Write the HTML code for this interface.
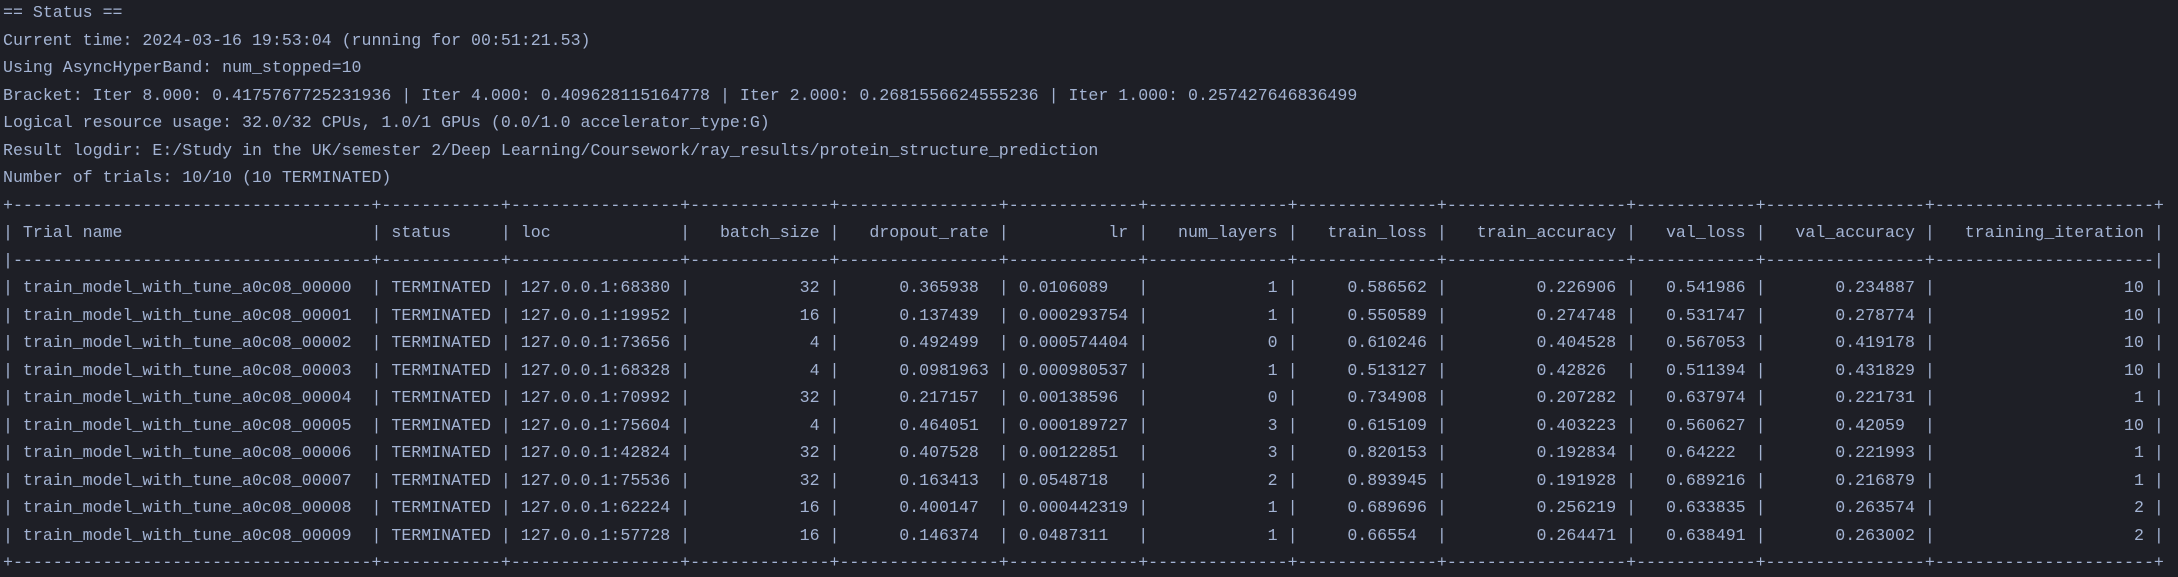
<!DOCTYPE html>
<html><head><meta charset="utf-8">
<style>
html,body{margin:0;padding:0;background:#1e1f26;width:2178px;height:577px;overflow:hidden}
pre{margin:0;position:absolute;left:3px;top:-1px;font-family:"Liberation Mono",monospace;font-size:16.6px;line-height:27.5px;color:#a3b3d3;white-space:pre}
</style></head><body>
<pre id="t">== Status ==
Current time: 2024-03-16 19:53:04 (running for 00:51:21.53)
Using AsyncHyperBand: num_stopped=10
Bracket: Iter 8.000: 0.4175767725231936 | Iter 4.000: 0.409628115164778 | Iter 2.000: 0.2681556624555236 | Iter 1.000: 0.257427646836499
Logical resource usage: 32.0/32 CPUs, 1.0/1 GPUs (0.0/1.0 accelerator_type:G)
Result logdir: E:/Study in the UK/semester 2/Deep Learning/Coursework/ray_results/protein_structure_prediction
Number of trials: 10/10 (10 TERMINATED)
</pre>
<script>
var W=[36,12,17,14,16,13,14,14,18,12,16,22];
var H=["Trial name","status","loc","batch_size","dropout_rate","lr","num_layers","train_loss","train_accuracy","val_loss","val_accuracy","training_iteration"];
var L=[1,1,1,0,0,0,0,0,0,0,0,0];
var rows=[
["train_model_with_tune_a0c08_00000","TERMINATED","127.0.0.1:68380","32","0.365938","0.0106089","1","0.586562","0.226906","0.541986","0.234887","10"],
["train_model_with_tune_a0c08_00001","TERMINATED","127.0.0.1:19952","16","0.137439","0.000293754","1","0.550589","0.274748","0.531747","0.278774","10"],
["train_model_with_tune_a0c08_00002","TERMINATED","127.0.0.1:73656","4","0.492499","0.000574404","0","0.610246","0.404528","0.567053","0.419178","10"],
["train_model_with_tune_a0c08_00003","TERMINATED","127.0.0.1:68328","4","0.0981963","0.000980537","1","0.513127","0.42826","0.511394","0.431829","10"],
["train_model_with_tune_a0c08_00004","TERMINATED","127.0.0.1:70992","32","0.217157","0.00138596","0","0.734908","0.207282","0.637974","0.221731","1"],
["train_model_with_tune_a0c08_00005","TERMINATED","127.0.0.1:75604","4","0.464051","0.000189727","3","0.615109","0.403223","0.560627","0.42059","10"],
["train_model_with_tune_a0c08_00006","TERMINATED","127.0.0.1:42824","32","0.407528","0.00122851","3","0.820153","0.192834","0.64222","0.221993","1"],
["train_model_with_tune_a0c08_00007","TERMINATED","127.0.0.1:75536","32","0.163413","0.0548718","2","0.893945","0.191928","0.689216","0.216879","1"],
["train_model_with_tune_a0c08_00008","TERMINATED","127.0.0.1:62224","16","0.400147","0.000442319","1","0.689696","0.256219","0.633835","0.263574","2"],
["train_model_with_tune_a0c08_00009","TERMINATED","127.0.0.1:57728","16","0.146374","0.0487311","1","0.66554","0.264471","0.638491","0.263002","2"]];
function sp(n){return n>0?" ".repeat(n):"";}
for(var c=0;c<12;c++){var md=0;rows.forEach(function(r){var i=r[c].indexOf(".");if(i>=0&&c>2)md=Math.max(md,r[c].length-i-1);});
 if(md)rows.forEach(function(r){var i=r[c].indexOf(".");r[c]=r[c]+sp(md-(r[c].length-i-1));});}
function cell(s,c){var w=W[c]-2;return " "+(L[c]?s+sp(w-s.length):sp(w-s.length)+s)+" ";}
function border(a,m,b){return a+W.map(function(w){return "-".repeat(w)}).join(m)+b;}
var out=[];
out.push(border("+","+","+"));
out.push("|"+H.map(cell).join("|")+"|");
out.push(border("|","+","|"));
rows.forEach(function(r){out.push("|"+r.map(cell).join("|")+"|");});
out.push(border("+","+","+"));
document.getElementById("t").textContent+=out.join("\n");
</script>
</body></html>
